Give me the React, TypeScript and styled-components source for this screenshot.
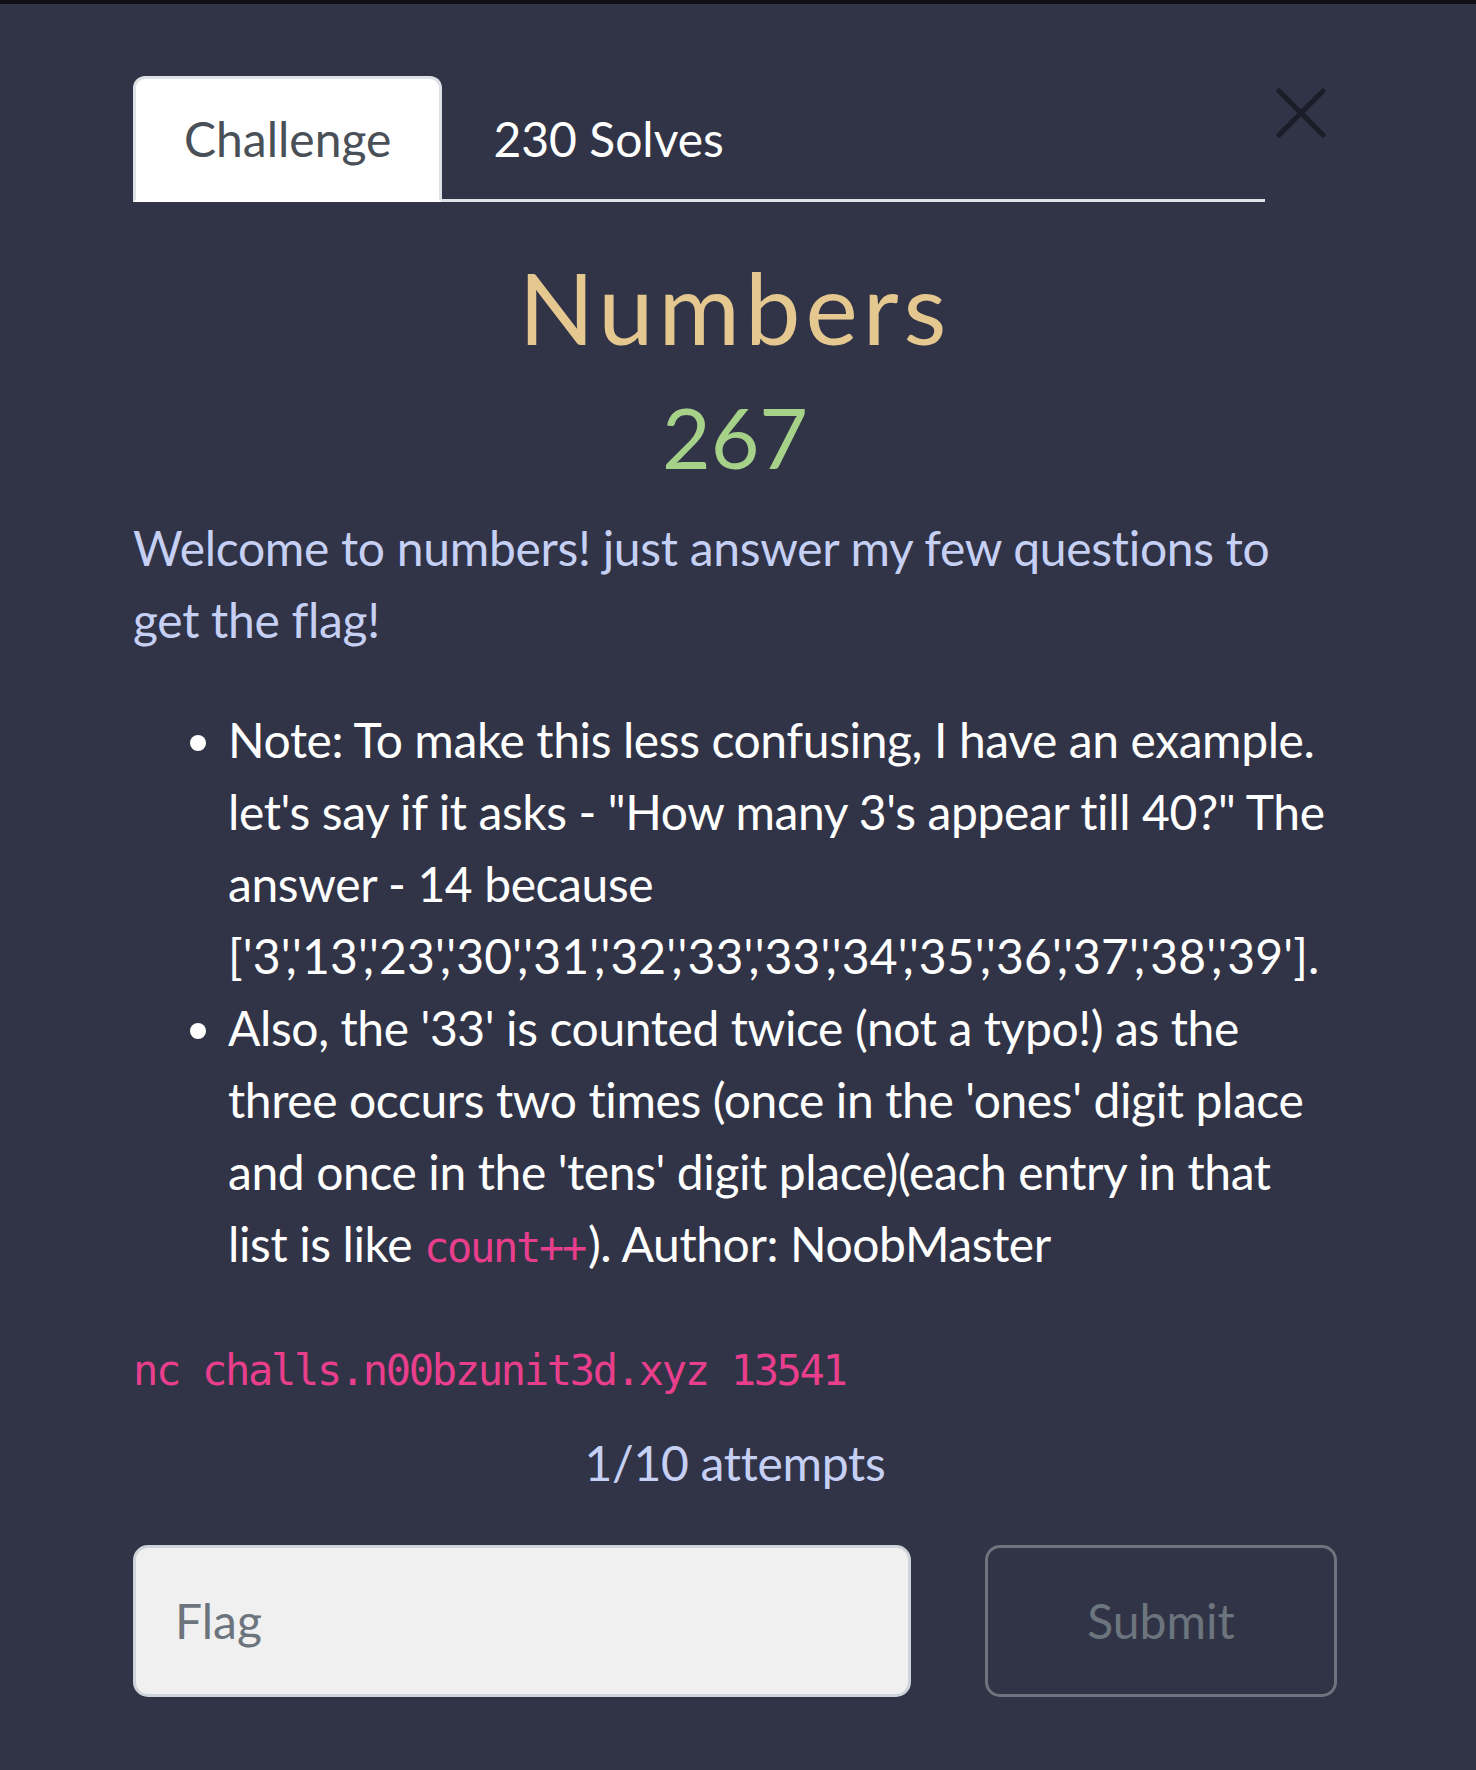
import React from "react";
import styled, { createGlobalStyle } from "styled-components";

const Global = createGlobalStyle`
  html, body {
    margin: 0;
    padding: 0;
    background: #313447;
  }
  body {
    font-family: Lato, "Noto Sans", sans-serif;
    font-variant-ligatures: none;
    color: #ffffff;
  }
  * { box-sizing: border-box; }
`;

const Page = styled.div`
  width: 1476px;
  min-height: 1770px;
  background: #313447;
  display: flex;
  flex-direction: column;
`;

const TopStrip = styled.div`
  height: 4px;
  background: #0f1014;
`;

const Modal = styled.div`
  width: 1204px;
  margin: 72px 0 0 133px;
  display: flex;
  flex-direction: column;
`;

const Header = styled.div`
  display: flex;
  align-items: flex-start;
`;

const Tabs = styled.ul`
  flex: 1;
  display: flex;
  list-style: none;
  margin: 0;
  padding: 0;
  border-bottom: 3px solid #dee2e6;
`;

const Tab = styled.li<{ $active?: boolean }>`
  margin-bottom: -3px;
  padding: 24px 48px;
  font-size: 48px;
  line-height: 72px;
  border: 3px solid ${(p) => (p.$active ? "#dee2e6" : "transparent")};
  border-bottom-color: ${(p) => (p.$active ? "#ffffff" : "transparent")};
  border-radius: 12px 12px 0 0;
  background: ${(p) => (p.$active ? "#ffffff" : "transparent")};
  color: ${(p) => (p.$active ? "#495057" : "#ffffff")};
`;

const Close = styled.button`
  width: 72px;
  height: 72px;
  margin-top: 1px;
  padding: 0;
  border: 0;
  background: transparent;
  display: flex;
  align-items: center;
  justify-content: center;
`;

const Title = styled.h2`
  margin: 0 0 20px;
  padding-top: 46px;
  text-align: center;
  font-size: 99px;
  font-weight: 400;
  line-height: 1.2;
  letter-spacing: 5px;
  color: #e5c890;
`;

const Score = styled.h3`
  margin: 0 0 24px;
  text-align: center;
  font-size: 84px;
  font-weight: 400;
  line-height: 1.2;
  color: #a6d189;
`;

const Desc = styled.p`
  margin: 0 0 48px;
  font-size: 48px;
  line-height: 72px;
  letter-spacing: -0.3px;
  color: #c6d0f5;
`;

const List = styled.ul`
  margin: 0 0 47px;
  padding-left: 95px;
  font-size: 48px;
  line-height: 72px;
  letter-spacing: -0.4px;
  color: #ffffff;
`;

const ArrayText = styled.span`
  letter-spacing: 0.15px;
`;

const Code = styled.code`
  font-family: "DejaVu Sans Mono", "Liberation Mono", monospace;
  font-size: 42px;
  letter-spacing: -2.3px;
  margin-right: 3px;
  color: #e83e8c;
`;

const CodeLine = styled.p`
  margin: 0 0 20px;
  font-size: 48px;
  line-height: 72px;
`;

const Attempts = styled.p`
  margin: 0 0 46px;
  text-align: center;
  font-size: 48px;
  line-height: 72px;
  letter-spacing: -0.3px;
  color: #c6d0f5;
`;

const SubmitRow = styled.div`
  display: grid;
  grid-template-columns: 778px 352px;
  column-gap: 74px;
`;

const FlagInput = styled.input`
  height: 152px;
  padding: 0 39px;
  background: #f0f0f0;
  border: 3px solid #ced4da;
  border-radius: 15px;
  font-family: Lato, "Noto Sans", sans-serif;
  font-size: 48px;
  color: #495057;
  outline: none;
  &::placeholder {
    color: #6c757d;
  }
`;

const SubmitButton = styled.button`
  height: 152px;
  background: transparent;
  border: 3px solid #6c757d;
  border-radius: 15px;
  font-family: Lato, "Noto Sans", sans-serif;
  font-size: 48px;
  color: #6c757d;
`;

export default function App() {
  return (
    <Page>
      <Global />
      <TopStrip />
      <Modal>
        <Header>
          <Tabs>
            <Tab $active>Challenge</Tab>
            <Tab>230 Solves</Tab>
          </Tabs>
          <Close aria-label="Close">
            <svg width="50" height="50" viewBox="0 0 50 50">
              <path
                d="M3 3 L47 47 M47 3 L3 47"
                stroke="#1b1d29"
                strokeWidth="5"
                strokeLinecap="round"
                fill="none"
              />
            </svg>
          </Close>
        </Header>
        <Title>Numbers</Title>
        <Score>267</Score>
        <Desc>Welcome to numbers! just answer my few questions to get the flag!</Desc>
        <List>
          <li>
            Note: To make this less confusing, I have an example. let's say if it asks - "How many 3's appear till 40?" The answer - 14 because{" "}
            <ArrayText>['3','13','23','30','31','32','33','33','34','35','36','37','38','39'].</ArrayText>
          </li>
          <li>
            Also, the '33' is counted twice (not a typo!) as the three occurs two times (once in the 'ones' digit place and once in the 'tens' digit place)(each entry in that list is like <Code>count++</Code>). Author: NoobMaster
          </li>
        </List>
        <CodeLine>
          <Code>nc challs.n00bzunit3d.xyz 13541</Code>
        </CodeLine>
        <Attempts>1/10 attempts</Attempts>
        <SubmitRow>
          <FlagInput placeholder="Flag" />
          <SubmitButton>Submit</SubmitButton>
        </SubmitRow>
      </Modal>
    </Page>
  );
}
